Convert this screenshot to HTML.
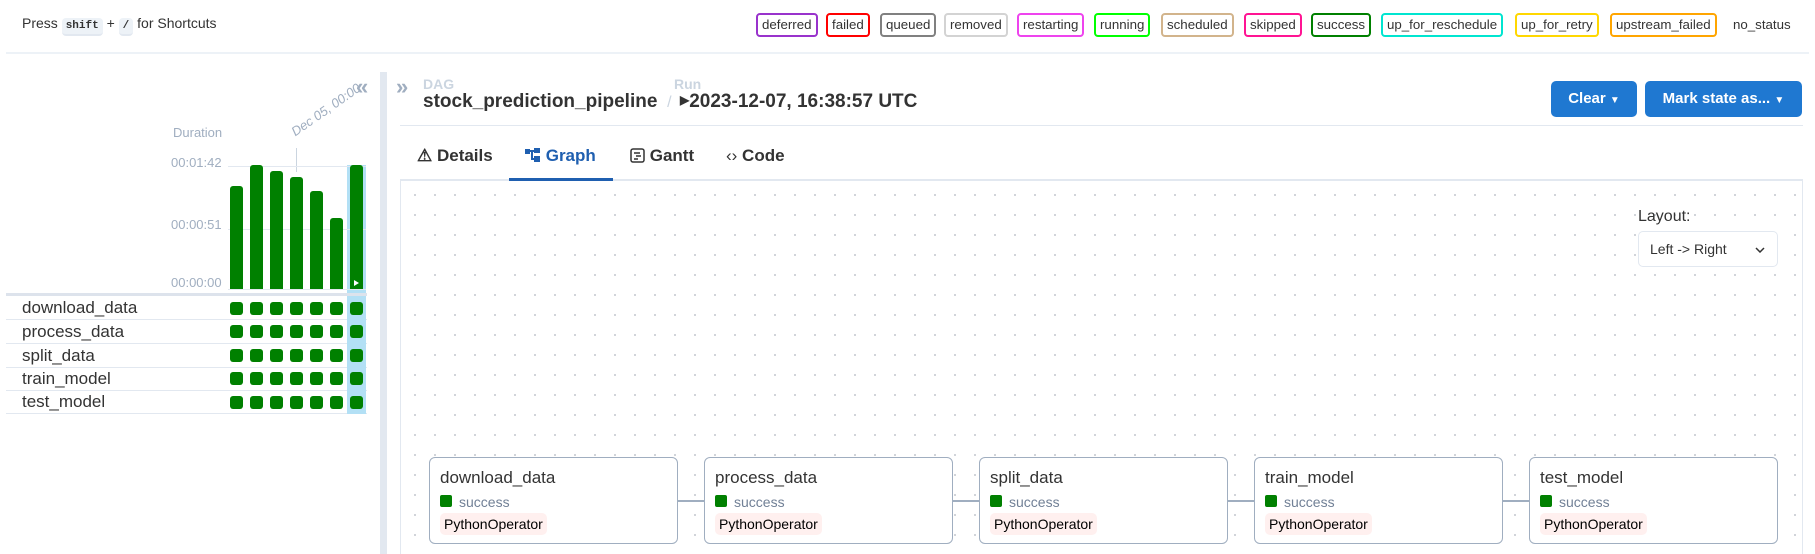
<!DOCTYPE html>
<html><head><meta charset="utf-8"><style>
*{box-sizing:border-box;margin:0;padding:0}
body{width:1815px;height:554px;overflow:hidden;background:#fff;font-family:"Liberation Sans",sans-serif;color:#222;position:relative}
.abs{position:absolute}
.kbd{display:inline-block;background:#edf2f7;border-radius:4px;font-family:"Liberation Mono",monospace;font-size:11px;font-weight:bold;padding:2px 4px;border-bottom:2px solid #e2e8f0}
.badge{position:absolute;top:13px;height:24px;border:2px solid;border-radius:4px;font-size:13.3px;line-height:20px;padding:0 4px;color:#333}
.bar{position:absolute;width:13px;background:#008000;border-radius:3px 3px 0 0}
.sq{position:absolute;width:13px;height:13px;background:#008000;border-radius:3px}
.row{position:absolute;left:6px;width:361px;height:24px;border-bottom:1px solid #e2e8f0;font-size:17px;line-height:24px;padding-left:16px;color:#333}
.ylab{position:absolute;font-size:13px;color:#a0aec0;left:171px}
.node{position:absolute;top:457px;width:249px;height:87px;border:1px solid #a0aec0;border-radius:6px;background:#fff}
.node .t{position:absolute;left:10px;top:10px;font-size:17px;color:#333}
.node .s{position:absolute;left:10px;top:37px;width:12px;height:12px;background:#008000;border-radius:2px}
.node .st{position:absolute;left:29px;top:36px;font-size:14px;color:#718096}
.node .op{position:absolute;left:10px;top:55px;background:#fff0ef;border-radius:5px;padding:3px 4px;font-size:14px;color:#000}
.edge{position:absolute;top:500px;height:2px;background:#a0aec0;width:27px}
.tab{position:absolute;top:146px;font-size:17px;font-weight:bold;color:#333}
</style></head><body>
<div class="abs" style="left:22px;top:15px;font-size:14px;color:#333">Press <span class="kbd">shift</span> + <span class="kbd">/</span> for Shortcuts</div>
<div class="badge" style="left:756px;border-color:#9933cc">deferred</div>
<div class="badge" style="left:826px;border-color:#ff0000">failed</div>
<div class="badge" style="left:880px;border-color:#808080">queued</div>
<div class="badge" style="left:944px;border-color:#d3d3d3">removed</div>
<div class="badge" style="left:1017px;border-color:#ee44ee">restarting</div>
<div class="badge" style="left:1094px;border-color:#00ff00">running</div>
<div class="badge" style="left:1161px;border-color:#d2b48c">scheduled</div>
<div class="badge" style="left:1244px;border-color:#ff1493">skipped</div>
<div class="badge" style="left:1311px;border-color:#008000">success</div>
<div class="badge" style="left:1381px;border-color:#00e5d0">up_for_reschedule</div>
<div class="badge" style="left:1515px;border-color:#ffd700">up_for_retry</div>
<div class="badge" style="left:1610px;border-color:#ffa500">upstream_failed</div>
<div class="abs" style="left:1733px;top:17px;font-size:13.3px;color:#333">no_status</div>
<div class="abs" style="left:6px;top:52px;width:1803px;height:2px;background:#edf2f7"></div>

<!-- left panel -->
<div class="abs" style="left:356px;top:74px;font-size:22px;color:#a0aec0;font-weight:bold">«</div>
<div class="abs" style="left:173px;top:125px;font-size:13px;color:#a0aec0">Duration</div>
<div class="abs" style="left:297px;top:124px;font-size:13px;color:#a0aec0;font-style:italic;transform:rotate(-35deg);transform-origin:left bottom;white-space:nowrap">Dec 05, 00:00</div>
<div class="abs" style="left:296px;top:148px;width:1px;height:24px;background:#cbd5e0"></div>
<div class="abs" style="left:347px;top:165px;width:19px;height:249px;background:#b3e0f5"></div>
<div class="abs" style="left:228px;top:166px;width:138px;height:1px;background:#e2e8f0"></div>
<div class="abs" style="left:228px;top:229px;width:138px;height:1px;background:#e2e8f0"></div>
<div class="abs" style="left:228px;top:289px;width:138px;height:1px;background:#e2e8f0"></div>
<div class="ylab" style="top:155px">00:01:42</div>
<div class="ylab" style="top:217px">00:00:51</div>
<div class="ylab" style="top:275px">00:00:00</div>
<div class="bar" style="left:230px;height:103px;top:186px"></div>
<div class="bar" style="left:250px;height:124px;top:165px"></div>
<div class="bar" style="left:270px;height:118px;top:171px"></div>
<div class="bar" style="left:290px;height:112px;top:177px"></div>
<div class="bar" style="left:310px;height:98px;top:191px"></div>
<div class="bar" style="left:330px;height:71px;top:218px"></div>
<div class="bar" style="left:350px;height:124px;top:165px"></div>
<div class="abs" style="left:354px;top:280px;width:0;height:0;border-left:5px solid #fff;border-top:3px solid transparent;border-bottom:3px solid transparent"></div>
<div class="abs" style="left:6px;top:293px;width:361px;height:3px;background:#dde3ec"></div>
<div class="row" style="top:296px">download_data</div>
<div class="row" style="top:320px">process_data</div>
<div class="row" style="top:344px">split_data</div>
<div class="row" style="top:367px">train_model</div>
<div class="row" style="top:390px">test_model</div>
<div class="abs" style="left:347px;top:296px;width:19px;height:118px;background:#b3e0f5"></div>
<div class="abs" style="left:380px;top:72px;width:7px;height:482px;background:#e2e8f0"></div>

<!-- right -->
<div class="abs" style="left:396px;top:74px;font-size:22px;color:#a0aec0;font-weight:bold">»</div>
<div class="abs" style="left:423px;top:76px;font-size:14px;color:#cbd5e0;font-weight:bold">DAG</div>
<div class="abs" style="left:423px;top:91px;font-size:19px;font-weight:bold;color:#333">stock_prediction_pipeline <span style="color:#cbd5e0;font-weight:normal;font-size:16px">&nbsp;/</span></div>
<div class="abs" style="left:674px;top:76px;font-size:14px;color:#cbd5e0;font-weight:bold">Run</div>
<div class="abs" style="left:680px;top:91px;font-size:19px;font-weight:bold;color:#333"><span style="font-size:12px;vertical-align:3px">▶</span>2023-12-07, 16:38:57 UTC</div>
<div class="abs" style="left:1551px;top:81px;width:86px;height:36px;background:#1f78d1;border-radius:5px;color:#fff;font-weight:bold;font-size:15px;line-height:36px;text-align:center">Clear <span style="font-size:10px">▼</span></div>
<div class="abs" style="left:1645px;top:81px;width:157px;height:36px;background:#1f78d1;border-radius:5px;color:#fff;font-weight:bold;font-size:15px;line-height:36px;text-align:center">Mark state as... <span style="font-size:10px">▼</span></div>
<div class="abs" style="left:400px;top:125px;width:1403px;height:1px;background:#e2e8f0"></div>
<div class="tab" style="left:417px">⚠ Details</div>
<div class="tab" style="left:525px;color:#1f5fb0"><svg width="16" height="14" style="vertical-align:-1px"><rect x="0" y="1" width="5" height="5" fill="#1f5fb0"/><rect x="9" y="0" width="6" height="5" fill="#1f5fb0"/><rect x="9" y="8" width="6" height="6" fill="#1f5fb0"/><path d="M5 3H9M7 3V11H9" stroke="#1f5fb0" stroke-width="2" fill="none"/></svg> Graph</div>
<div class="tab" style="left:630px"><svg width="15" height="15" style="vertical-align:-2px"><rect x="1" y="1" width="13" height="13" rx="2" fill="none" stroke="#333" stroke-width="1.5"/><path d="M4 5H10M6 8H11M4 11H8" stroke="#333" stroke-width="1.4"/></svg> Gantt</div>
<div class="tab" style="left:726px"><span style="font-weight:normal">‹›</span> Code</div>
<div class="abs" style="left:400px;top:179px;width:1403px;height:2px;background:#e2e8f0"></div>
<div class="abs" style="left:509px;top:178px;width:104px;height:3px;background:#1f5fb0"></div>
<div class="abs" style="left:400px;top:181px;width:1403px;height:373px;border-left:1px solid #e2e8f0;border-right:1px solid #e2e8f0;background-image:radial-gradient(circle,#c8ccd2 0.8px,transparent 1.2px);background-size:20px 20px;background-position:4px 4px"></div>
<div class="abs" style="left:1638px;top:208px;font-size:16px;color:#333">Layout:</div>
<div class="abs" style="left:1638px;top:231px;width:140px;height:36px;border:1px solid #e2e8f0;border-radius:5px;background:#fff;font-size:14px;line-height:34px;padding-left:11px;color:#333">Left -&gt; Right<svg width="10" height="6" style="position:absolute;right:12px;top:15px"><path d="M1 1L5 5L9 1" stroke="#333" stroke-width="1.5" fill="none"/></svg></div>

<div class="edge" style="left:677px"></div>
<div class="edge" style="left:953px"></div>
<div class="edge" style="left:1227px"></div>
<div class="edge" style="left:1502px"></div>
<div class="node" style="left:429px"><div class="t">download_data</div><div class="s"></div><div class="st">success</div><div class="op">PythonOperator</div></div>
<div class="node" style="left:704px"><div class="t">process_data</div><div class="s"></div><div class="st">success</div><div class="op">PythonOperator</div></div>
<div class="node" style="left:979px"><div class="t">split_data</div><div class="s"></div><div class="st">success</div><div class="op">PythonOperator</div></div>
<div class="node" style="left:1254px"><div class="t">train_model</div><div class="s"></div><div class="st">success</div><div class="op">PythonOperator</div></div>
<div class="node" style="left:1529px"><div class="t">test_model</div><div class="s"></div><div class="st">success</div><div class="op">PythonOperator</div></div>

<div style="position:absolute;left:0;top:0">
<div class="sq" style="left:230px;top:302px"></div><div class="sq" style="left:250px;top:302px"></div><div class="sq" style="left:270px;top:302px"></div><div class="sq" style="left:290px;top:302px"></div><div class="sq" style="left:310px;top:302px"></div><div class="sq" style="left:330px;top:302px"></div><div class="sq" style="left:350px;top:302px"></div>
<div class="sq" style="left:230px;top:325px"></div><div class="sq" style="left:250px;top:325px"></div><div class="sq" style="left:270px;top:325px"></div><div class="sq" style="left:290px;top:325px"></div><div class="sq" style="left:310px;top:325px"></div><div class="sq" style="left:330px;top:325px"></div><div class="sq" style="left:350px;top:325px"></div>
<div class="sq" style="left:230px;top:349px"></div><div class="sq" style="left:250px;top:349px"></div><div class="sq" style="left:270px;top:349px"></div><div class="sq" style="left:290px;top:349px"></div><div class="sq" style="left:310px;top:349px"></div><div class="sq" style="left:330px;top:349px"></div><div class="sq" style="left:350px;top:349px"></div>
<div class="sq" style="left:230px;top:372px"></div><div class="sq" style="left:250px;top:372px"></div><div class="sq" style="left:270px;top:372px"></div><div class="sq" style="left:290px;top:372px"></div><div class="sq" style="left:310px;top:372px"></div><div class="sq" style="left:330px;top:372px"></div><div class="sq" style="left:350px;top:372px"></div>
<div class="sq" style="left:230px;top:396px"></div><div class="sq" style="left:250px;top:396px"></div><div class="sq" style="left:270px;top:396px"></div><div class="sq" style="left:290px;top:396px"></div><div class="sq" style="left:310px;top:396px"></div><div class="sq" style="left:330px;top:396px"></div><div class="sq" style="left:350px;top:396px"></div>
</div>
</body></html>
